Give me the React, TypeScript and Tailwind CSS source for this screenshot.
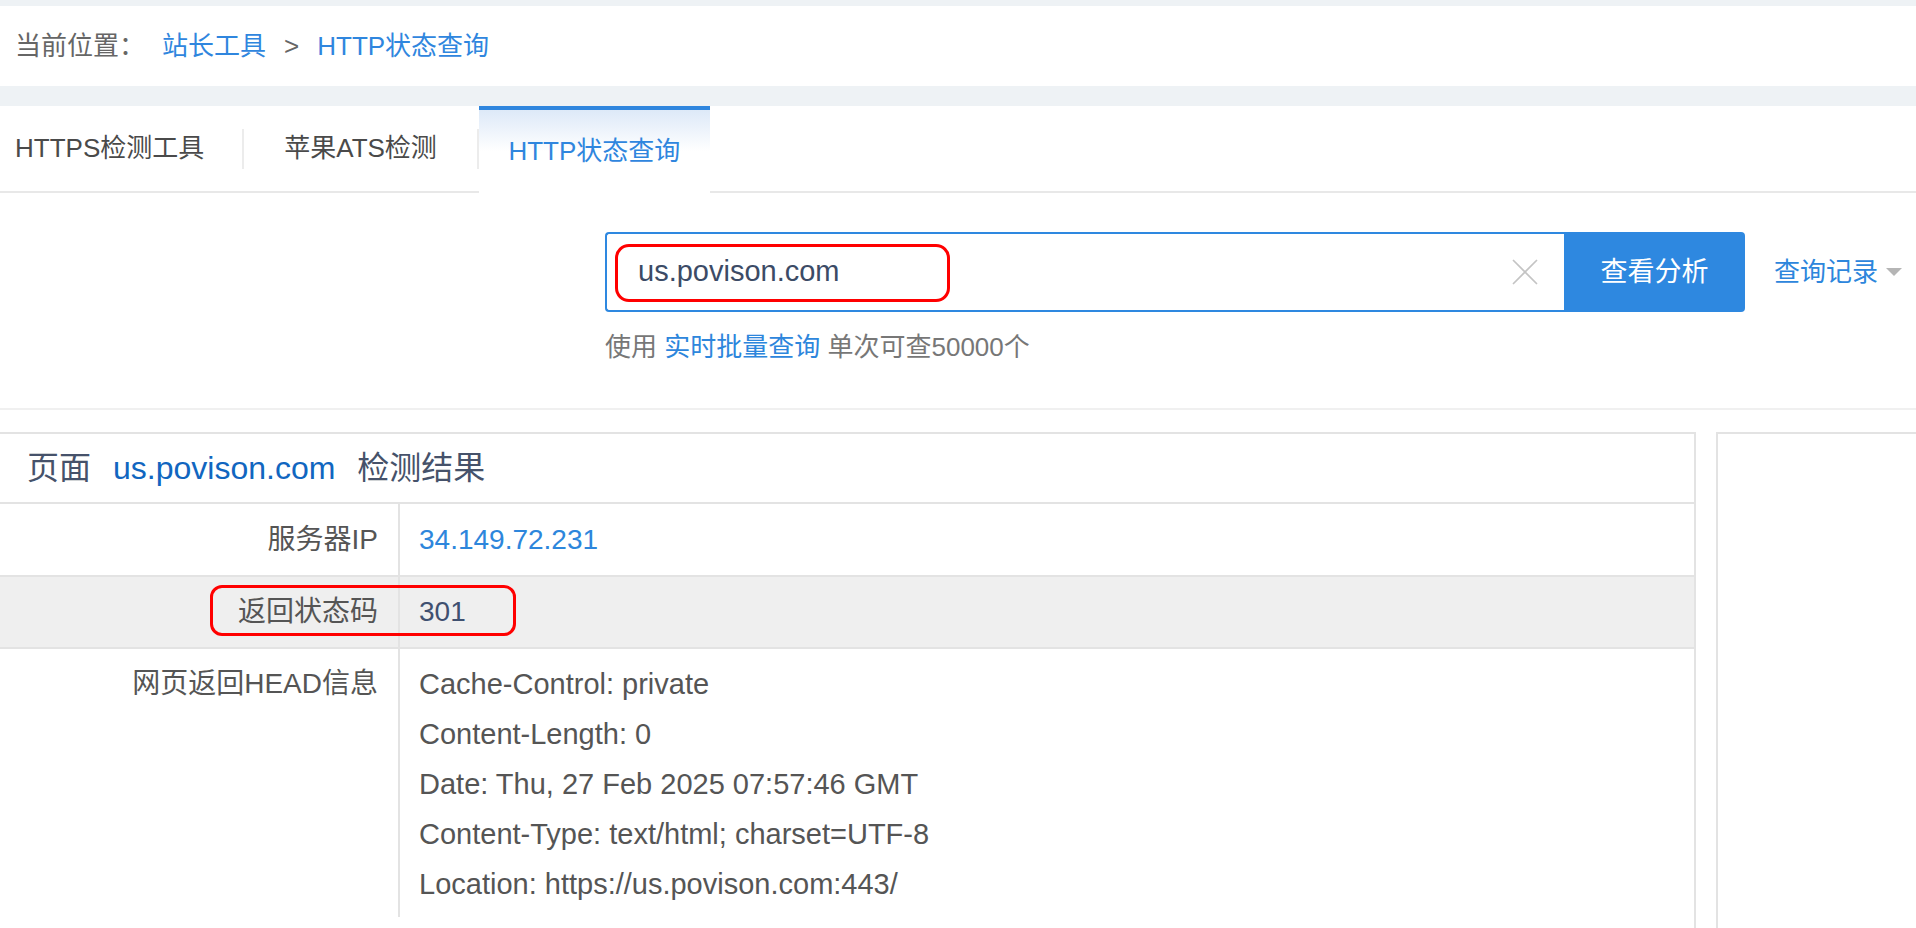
import { X } from "lucide-react"

const font = { fontFamily: '"Liberation Sans", "Noto Sans CJK SC", sans-serif' }

const headLines = [
  "Cache-Control: private",
  "Content-Length: 0",
  "Date: Thu, 27 Feb 2025 07:57:46 GMT",
  "Content-Type: text/html; charset=UTF-8",
  "Location: https://us.povison.com:443/",
]

export default function App() {
  return (
    <div className="w-full min-h-[928px] bg-white overflow-hidden" style={font}>
      {/* top strip */}
      <div className="h-[6px] bg-[#eef2f5]" />

      {/* Breadcrumb */}
      <div className="h-[80px] flex items-center pl-[15px] text-[26px]">
        <span className="text-[#666]">当前位置：</span>
        <span className="ml-[17px] text-[#2f86de]">站长工具</span>
        <span className="mx-[18px] text-[#666]">&gt;</span>
        <span className="text-[#2f86de]">HTTP状态查询</span>
      </div>

      <div className="h-[20px] bg-[#eef2f5]" />

      {/* Tabs */}
      <div className="h-[87px] flex items-stretch border-b-2 border-[#e8e8e8] text-[26px]">
        <div className="flex items-center pl-[15px] pr-[38px] text-[#4a4a4a]">HTTPS检测工具</div>
        <div className="w-[2px] self-center h-[40px] bg-[#ececec]" />
        <div className="flex items-center px-[40px] text-[#4a4a4a]">苹果ATS检测</div>
        <div className="w-[2px] self-center h-[40px] bg-[#ececec]" />
        <div className="w-[231px] -mb-[2px] flex items-center justify-center border-t-4 border-[#2f86de] bg-gradient-to-b from-[#dde9f8] via-white to-white text-[#2f86de]">
          HTTP状态查询
        </div>
      </div>

      {/* Search */}
      <div className="pt-[39px] pb-[43px] border-b-2 border-[#f0f0f0]">
        <div className="ml-[605px] flex items-center">
          <div className="relative w-[959px] h-[80px] flex items-center border-2 border-r-0 border-[#2e88e0] rounded-l-[4px] pl-[31px] pr-[16px]">
            <span className="flex-1 text-[29px] text-[#3c4b66]">us.povison.com</span>
            <X className="w-[46px] h-[46px] text-[#c4c4c4]" strokeWidth={0.9} />
            <div className="absolute left-[8px] top-[10px] w-[335px] h-[58px] border-[3px] border-[#f00] rounded-[14px]" />
          </div>
          <button className="w-[181px] h-[80px] bg-[#2e88e0] text-white text-[27px] rounded-r-[4px]">查看分析</button>
          <span className="ml-[29px] text-[26px] text-[#2d86dc]">查询记录</span>
          <span className="ml-[8px] w-0 h-0 border-l-[8px] border-r-[8px] border-t-[8px] border-l-transparent border-r-transparent border-t-[#b5b5b5]" />
        </div>
        <div className="ml-[605px] mt-[17px] text-[26px] leading-[36px] text-[#777]">
          使用 <span className="text-[#2d86dc]">实时批量查询</span> 单次可查50000个
        </div>
      </div>

      {/* Results */}
      <div className="mt-[22px] flex gap-[20px]">
        <div className="w-[1696px] shrink-0 border-t-2 border-r-2 border-b-2 border-[#e3e3e3]">
          <div className="h-[70px] flex items-center pl-[27px] border-b-2 border-[#e3e3e3] text-[32px] text-[#46526a]">
            页面<span className="mx-[22px] text-[#1166c0]">us.povison.com</span>检测结果
          </div>

          <div className="grid grid-cols-[400px_1fr] text-[28px]">
            <div className="h-[73px] flex items-center justify-end pr-[20px] border-r-2 border-b-2 border-[#e3e3e3] text-[#555]">服务器IP</div>
            <div className="h-[73px] flex items-center pl-[19px] border-b-2 border-[#e3e3e3] text-[#2d86dc]">34.149.72.231</div>

            <div className="relative h-[72px] flex items-center justify-end pr-[20px] border-r-2 border-b-2 border-[#e3e3e3] bg-[#efefef] text-[#555]">
              返回状态码
              <div className="absolute left-[210px] top-[8px] w-[306px] h-[51px] border-[3px] border-[#f00] rounded-[12px] z-10" />
            </div>
            <div className="h-[72px] flex items-center pl-[19px] border-b-2 border-[#e3e3e3] bg-[#efefef] text-[#3f5070]">301</div>

            <div className="pt-[10px] pr-[20px] text-right border-r-2 border-[#e3e3e3] text-[#555] leading-[50px]">网页返回HEAD信息</div>
            <div className="pt-[10px] pb-[8px] pl-[19px] text-[29px] text-[#555] leading-[50px]">
              {headLines.map((l) => (
                <div key={l}>{l}</div>
              ))}
            </div>
          </div>
        </div>

        <div className="w-[240px] shrink-0 h-[520px] border-2 border-[#e3e3e3]" />
      </div>
    </div>
  )
}
